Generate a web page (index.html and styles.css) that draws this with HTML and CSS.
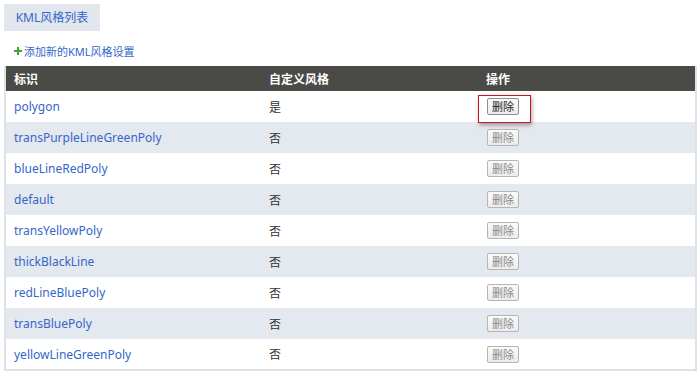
FILE: index.html
```html
<!DOCTYPE html>
<html>
<head>
<meta charset="utf-8">
<link rel="stylesheet" href="styles.css">
</head>
<body>
<div class="page">
  <div class="tabs"><span class="tab">KML风格列表</span></div>
  <div class="add"><span class="plus"><svg width="8" height="8" viewBox="0 0 8 8"><path d="M3 0h2v3h3v2H5v3H3V5H0V3h3z" fill="#3fa533"/></svg></span><a href="#">添加新的KML风格设置</a></div>
  <table class="grid">
    <thead>
      <tr><th class="c1">标识</th><th class="c2">自定义风格</th><th class="c3">操作</th></tr>
    </thead>
    <tbody>
      <tr><td><a href="#">polygon</a></td><td>是</td><td><span class="hl"><button class="btn active">删除</button></span></td></tr>
      <tr><td><a href="#">transPurpleLineGreenPoly</a></td><td>否</td><td><button class="btn">删除</button></td></tr>
      <tr><td><a href="#">blueLineRedPoly</a></td><td>否</td><td><button class="btn">删除</button></td></tr>
      <tr><td><a href="#">default</a></td><td>否</td><td><button class="btn">删除</button></td></tr>
      <tr><td><a href="#">transYellowPoly</a></td><td>否</td><td><button class="btn">删除</button></td></tr>
      <tr><td><a href="#">thickBlackLine</a></td><td>否</td><td><button class="btn">删除</button></td></tr>
      <tr><td><a href="#">redLineBluePoly</a></td><td>否</td><td><button class="btn">删除</button></td></tr>
      <tr><td><a href="#">transBluePoly</a></td><td>否</td><td><button class="btn">删除</button></td></tr>
      <tr><td><a href="#">yellowLineGreenPoly</a></td><td>否</td><td><button class="btn">删除</button></td></tr>
    </tbody>
  </table>
</div>
</body>
</html>
```

FILE: styles.css
```css
* { box-sizing: border-box; }
body {
  margin: 0;
  background: #fff;
  font-family: "Noto Sans", "Noto Sans CJK SC", sans-serif;
  font-size: 12px;
  color: #333;
}
.page { padding: 4px 3px 0 4px; }
.tabs { display: flex; }
.tab {
  display: block;
  width: 96px;
  height: 27px;
  line-height: 27px;
  text-align: center;
  background: #e2e6ed;
  color: #3467c8;
  font-size: 12px;
}
.add {
  display: flex;
  align-items: center;
  margin: 12px 0 0 10px;
  height: 15px;
}
.plus { display: flex; margin-right: 2px; }
a { color: #3467c8; text-decoration: none; }
.add a { font-size: 11px; }
.grid {
  margin-top: 8px;
  width: 693px;
  border-collapse: collapse;
  border: 2px solid #dde1e8;
  border-top: none;
}
.grid th {
  background: #4a4a47;
  color: #fff;
  font-weight: bold;
  text-align: left;
  height: 25px;
  padding: 0 0 0 8px;
  font-size: 12px;
}
.grid th.c1 { width: 256px; }
.grid th.c2 { width: 217px; }
.grid td {
  height: 31px;
  padding: 0 0 0 8px;
  vertical-align: middle;
}
.grid td:nth-child(3) { padding-left: 9px; }
.grid tbody tr:nth-child(even) td { background: #e4e8ef; }
.btn {
  display: block;
  width: 32px;
  height: 17px;
  padding: 0;
  border: 1px solid #b5b5b5;
  border-radius: 2px;
  background: linear-gradient(#fafafa, #ececec);
  color: #8a8a8a;
  font-family: "Noto Sans CJK SC", sans-serif;
  font-size: 11px;
  line-height: 15px;
}
.btn.active { color: #222; border-color: #8e8e8e; }
.hl {
  position: relative;
  display: block;
  width: 32px;
}
.hl::before {
  content: "";
  position: absolute;
  left: -9px;
  top: -3px;
  width: 51px;
  height: 26px;
  border: 1px solid #c4161c;
  box-shadow: 1px 2px 4px rgba(0,0,0,0.35);
}
```
